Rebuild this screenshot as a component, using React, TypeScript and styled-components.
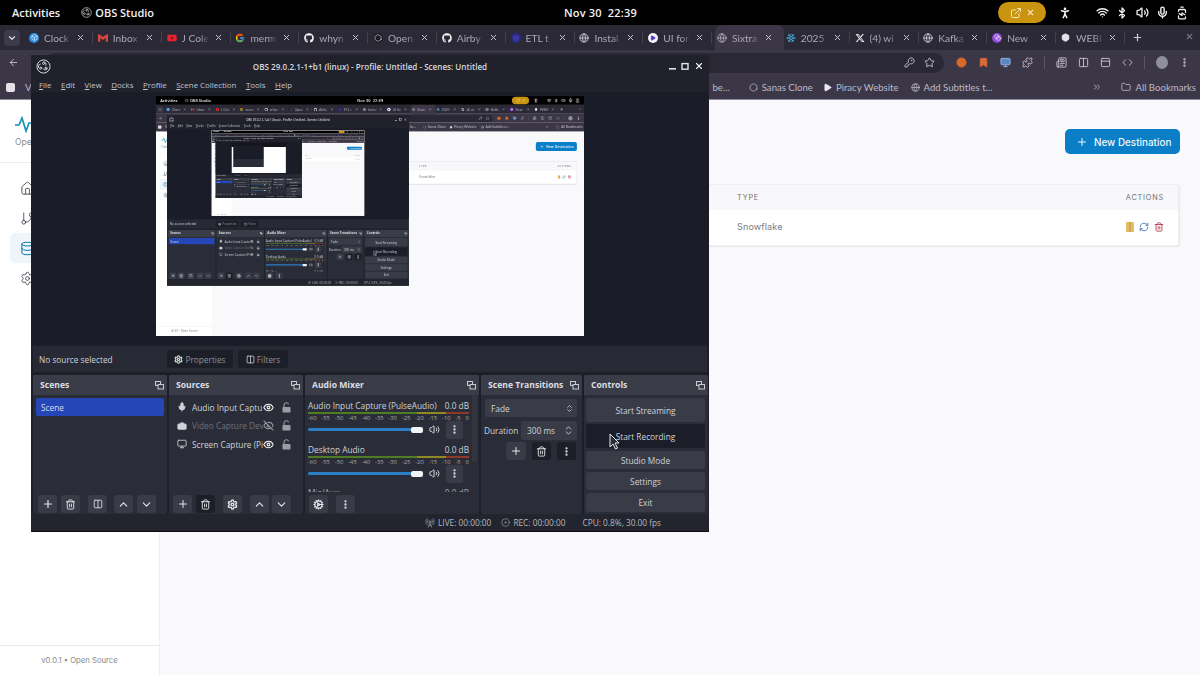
import * as React from 'react';
import styled, { createGlobalStyle } from 'styled-components';
import {
  ArrowLeft, BatteryCharging, Bluetooth, ChevronDown, ChevronUp, ChevronsUpDown, Camera, Code, Cog, Database,
  EllipsisVertical, ExternalLink, Eye, EyeOff, Folder, GitBranch, House, KeyRound, Mic, Monitor,
  PersonStanding, Plus, Puzzle, RefreshCw, Settings, Star, Trash2, Volume2, Wifi, X, Blend, Columns2, Newspaper, PanelTop,
  ChevronsRight, RadioTower, Disc, Bookmark, Globe, Play, Snowflake, Box, Hexagon,
} from 'lucide-react';
import { FaGithub, FaXTwitter, FaYoutube } from 'react-icons/fa6';
import { FcGoogle } from 'react-icons/fc';
import { SiGmail } from 'react-icons/si';

const GlobalStyle = createGlobalStyle`
  html, body { margin: 0; padding: 0; background: #000; }
  * { box-sizing: border-box; }
`;

const MAX_DEPTH = 2;
const SCALE = 428 / 1200;

const Screen = styled.div`
  position: relative;
  width: 1200px;
  height: 675px;
  overflow: hidden;
  display: flex;
  flex-direction: column;
  font-family: 'Open Sans', sans-serif;
  background: #fff;
`;

/* gnome top bar */
const TopBar = styled.div`
  height: 25px;
  flex: none;
  background: #000;
  color: #f2f2f2;
  display: grid;
  grid-template-columns: 1fr auto 1fr;
  align-items: center;
  padding: 0 11px 0 12px;
  font-size: 11px;
  font-weight: 600;
`;

const TopLeft = styled.div`
  display: flex;
  align-items: center;
`;

const AppName = styled.div`
  margin-left: 21px;
  display: flex;
  align-items: center;
  gap: 3px;
`;

const Clock = styled.div`
  letter-spacing: 0.2px;
  display: flex;
  gap: 6px;
`;

const TopRight = styled.div`
  display: flex;
  align-items: center;
  justify-content: flex-end;
`;

const AmberPill = styled.div`
  width: 48px;
  height: 21px;
  border-radius: 11px;
  background: #c9940f;
  display: flex;
  align-items: center;
  justify-content: center;
  gap: 4px;
  margin-right: 12px;
`;

const TrayIcons = styled.div`
  display: flex;
  align-items: center;
  gap: 6px;
`;

const TraySlot = styled.div<{ $gap?: number }>`
  width: 14px;
  display: flex;
  justify-content: center;
  margin-left: ${({ $gap }) => $gap ?? 0}px;
`;

/* browser chrome */
const TabStrip = styled.div`
  height: 25px;
  flex: none;
  background: #2c2937;
  display: flex;
  align-items: center;
  padding-left: 4px;
  color: #aaa6b6;
  font-family: Lato, sans-serif;
  font-size: 10.2px;
`;

const ChevronBox = styled.div`
  width: 16px;
  height: 16px;
  border-radius: 4px;
  background: #3d3a49;
  display: flex;
  align-items: center;
  justify-content: center;
  margin-right: 7px;
  flex: none;
`;

const Tab = styled.div<{ $active?: boolean }>`
  width: 68.8px;
  height: 25px;
  flex: none;
  display: flex;
  align-items: center;
  gap: 5px;
  padding-left: 2px;
  border-radius: 7px 7px 0 0;
  background: ${({ $active }) => ($active ? '#3b3746' : 'transparent')};

  &::after {
    content: '';
    width: 1px;
    height: 11px;
    margin-left: 2px;
    flex: none;
    background: ${({ $active }) => ($active ? 'transparent' : '#45414f')};
  }
`;

const TabTitle = styled.span`
  width: 28px;
  flex: none;
  white-space: nowrap;
  overflow: hidden;
  -webkit-mask-image: linear-gradient(90deg, #000 65%, transparent);
  mask-image: linear-gradient(90deg, #000 65%, transparent);
`;

const TabClose = styled.span`
  display: flex;
  flex: none;
  margin-left: -1px;
`;

const FavSquare = styled.span<{ $bg: string }>`
  width: 10px;
  height: 10px;
  flex: none;
  border-radius: 50%;
  background: ${({ $bg }) => $bg};
  display: flex;
  align-items: center;
  justify-content: center;
  overflow: hidden;
`;

const NewTab = styled.div`
  margin-left: 4px;
  display: flex;
  flex: 1;
  justify-content: space-between;
  padding-right: 6px;
`;

const Toolbar = styled.div`
  height: 25px;
  flex: none;
  background: #3b3746;
  display: flex;
  align-items: center;
  padding: 0 8px;
  color: #c9c5d2;
`;

const AddressBar = styled.div`
  margin-left: 25px;
  width: 900px;
  height: 20px;
  flex: none;
  border-radius: 10px;
  background: #2b2835;
  display: flex;
  align-items: center;
  justify-content: flex-end;
  gap: 9px;
  padding-right: 9px;
`;

const ToolIcons = styled.div`
  display: flex;
  align-items: center;
  margin-left: 12px;
  gap: 11px;
`;

const ToolDivider = styled.div`
  width: 1px;
  height: 13px;
  flex: none;
  background: #5a5666;
`;

const Avatar = styled.div`
  width: 12px;
  height: 13px;
  flex: none;
  border-radius: 50%;
  background: #8d8f99;
`;

const BookmarkBar = styled.div`
  height: 25px;
  flex: none;
  background: #3b3746;
  border-bottom: 1px solid #8f8a9c;
  display: flex;
  align-items: center;
  padding-left: 6px;
  color: #bdb9c7;
  font-family: Lato, sans-serif;
  font-size: 9.6px;
  white-space: nowrap;
`;

const BookmarkItem = styled.div<{ $left: number }>`
  display: flex;
  flex: none;
  align-items: center;
  gap: 4px;
  margin-left: ${({ $left }) => $left}px;
`;

const SmallSquare = styled.div`
  width: 9px;
  height: 9px;
  flex: none;
  border-radius: 2px;
  background: #e4e2e8;
`;

/* page behind */
const Page = styled.div`
  flex: 1;
  display: flex;
  min-height: 0;
  font-family: Inter, sans-serif;
`;

const Sidebar = styled.aside`
  width: 160px;
  flex: none;
  background: #fff;
  border-right: 1px solid #eeeef1;
  display: flex;
  flex-direction: column;
`;

const Brand = styled.div`
  height: 63px;
  flex: none;
  padding: 16px 0 0 15px;
  border-bottom: 1px solid #ececef;
  color: #8a8f98;
  font-size: 8.5px;
  line-height: 18px;
`;

const Nav = styled.nav`
  padding: 10px 10px 0;
  flex: 1;
  display: flex;
  flex-direction: column;
`;

const NavItem = styled.div<{ $active?: boolean }>`
  height: 30px;
  display: flex;
  align-items: center;
  padding-left: 10px;
  border-radius: 5px;
  color: ${({ $active }) => ($active ? '#0a6ea8' : '#3f4650')};
  background: ${({ $active }) => ($active ? '#eef6fb' : 'transparent')};
`;

const SidebarFoot = styled.div`
  height: 30px;
  flex: none;
  border-top: 1px solid #e8e8eb;
  display: flex;
  align-items: center;
  justify-content: center;
  color: #868a91;
  font-size: 7.7px;
`;

const Main = styled.main`
  flex: 1;
  background: #f9f9fb;
  padding: 29px 20px 0 20px;
  display: flex;
  flex-direction: column;
`;

const MainHead = styled.div`
  display: flex;
  justify-content: flex-end;
  margin-bottom: 30px;
`;

const PrimaryButton = styled.button`
  width: 115px;
  height: 25px;
  border: 0;
  border-radius: 5px;
  background: #0a7ec7;
  color: #eef7fd;
  display: flex;
  align-items: center;
  gap: 6px;
  padding: 0 0 0 11px;
  font-family: Inter, sans-serif;
  font-size: 9.9px;
  font-weight: 500;
`;

const Table = styled.div`
  margin-right: 1px;
  border: 1px solid #efeff2;
  border-radius: 3px;
  box-shadow: 1px 1px 2px rgba(0, 0, 0, 0.07);
  background: #fff;
`;

const TableRow = styled.div<{ $head?: boolean }>`
  height: ${({ $head }) => ($head ? 25 : 35)}px;
  padding-bottom: ${({ $head }) => ($head ? 0 : 2)}px;
  display: grid;
  grid-template-columns: 556px 1fr auto;
  align-items: center;
  padding-right: 14px;
  background: ${({ $head }) => ($head ? '#f8f8fa' : '#fff')};
  color: ${({ $head }) => ($head ? '#6f7177' : '#7a7c82')};
  font-size: ${({ $head }) => ($head ? 7.3 : 9.1)}px;
  letter-spacing: ${({ $head }) => ($head ? 0.8 : 0.1)}px;
`;

const RowActions = styled.div`
  display: flex;
  gap: 5px;
  align-items: center;
`;

/* obs window: lies over the desktop */
const ObsWindow = styled.div`
  position: absolute;
  left: 31px;
  top: 55px;
  width: 678px;
  height: 477px;
  background: #1c1e28;
  border-bottom: 1px solid #0c0c10;
  display: flex;
  flex-direction: column;
  font-family: 'Open Sans', sans-serif;
  color: #cfd2d8;
  font-size: 8.3px;
`;

const TitleBar = styled.div`
  height: 22px;
  flex: none;
  display: grid;
  grid-template-columns: 60px 1fr 60px;
  align-items: center;
  padding: 0 5px;
  background: #20212b;
  color: #d6d7dc;
  font-size: 8.1px;
  font-weight: 600;
`;

const TitleText = styled.div`
  text-align: center;
  white-space: nowrap;
`;

const WindowButtons = styled.div`
  display: flex;
  justify-content: flex-end;
  align-items: center;
  gap: 5px;
`;

const MenuBar = styled.div`
  height: 15px;
  flex: none;
  display: flex;
  align-items: center;
  gap: 9.5px;
  padding-left: 8px;
  background: #20212b;
  color: #c2c4cb;
  font-size: 7.9px;
`;

const MenuItem = styled.span`
  &::first-letter {
    text-decoration: underline;
  }
`;

const PreviewArea = styled.div`
  height: 253px;
  flex: none;
  padding-top: 4px;
  display: flex;
  justify-content: center;
  background: #1a1c27;
`;

const PreviewFrame = styled.div`
  width: 428px;
  height: 240px;
  overflow: hidden;
  flex: none;
  background: #fff;
`;

const Scaled = styled.div`
  width: 1200px;
  height: 675px;
  transform: scale(${SCALE});
  transform-origin: top left;
  filter: blur(0.7px);
`;

/* the innermost capture is only a few pixels wide, so it is flat colour */
const TinyCapture = styled.div`
  width: 100%;
  height: 100%;
  background:
    linear-gradient(#1a1c27 0 64%, #2a2d37 64% 100%) 7.5% 35% / 56% 70% no-repeat,
    linear-gradient(#16141d 0 15%, #ffffff 15% 100%);
`;

const ContextBar = styled.div`
  height: 26px;
  flex: none;
  margin: 1px 2px 0;
  padding-left: 6px;
  background: #272a34;
  display: flex;
  align-items: center;
`;

const ContextLabel = styled.span`
  width: 128px;
`;

const ContextButton = styled.div<{ $w: number }>`
  width: ${({ $w }) => $w}px;
  height: 18px;
  margin-right: 5px;
  border-radius: 3px;
  background: #1c1e28;
  color: #8f929a;
  display: flex;
  align-items: center;
  justify-content: center;
  gap: 2px;
`;

const Docks = styled.div`
  height: 139px;
  flex: none;
  margin-top: 3px;
  padding: 0 1px 0 2px;
  display: grid;
  grid-template-columns: 134px 134px 174px 101px 1fr;
  gap: 2px;
`;

const Dock = styled.section`
  background: #2a2d37;
  display: flex;
  flex-direction: column;
  min-width: 0;
  border-radius: 2px;
  overflow: hidden;
`;

const DockHeader = styled.header`
  height: 20px;
  flex: none;
  background: #3a3d48;
  display: flex;
  align-items: center;
  justify-content: space-between;
  padding: 0 3px 0 7px;
  font-weight: 700;
  font-size: 8.6px;
  color: #dcdee3;
`;

const DockBody = styled.div`
  flex: 1;
  min-height: 0;
  overflow: hidden;
`;

const SceneRow = styled.div`
  margin: 3px 3px 0;
  height: 18px;
  border-radius: 2px;
  background: #2446b6;
  color: #d6def5;
  display: flex;
  align-items: center;
  padding-left: 5px;
`;

const SourceList = styled.div`
  padding: 3px 0 0 8px;
`;

const SourceRow = styled.div<{ $off?: boolean }>`
  height: 18.6px;
  display: grid;
  grid-template-columns: 15px 71px 19px 14px;
  align-items: center;
  color: ${({ $off }) => ($off ? '#6e717a' : '#cfd2d8')};
`;

const SourceName = styled.span`
  white-space: nowrap;
  overflow: hidden;
`;

const DockFooter = styled.div`
  height: 20px;
  flex: none;
  display: flex;
  align-items: center;
  padding-left: 4px;
  background: #2a2d37;
`;

const IconButton = styled.div<{ $dark?: boolean; $w?: number; $ml?: number }>`
  width: ${({ $w }) => $w ?? 19}px;
  height: 18px;
  flex: none;
  margin-left: ${({ $ml }) => $ml ?? 0}px;
  border-radius: 3px;
  display: flex;
  align-items: center;
  justify-content: center;
  background: ${({ $dark }) => ($dark ? '#1c1e28' : '#393c47')};
  color: #e4e5e9;
`;

const MixerBody = styled.div`
  flex: 1;
  min-height: 0;
  overflow: hidden;
  display: grid;
  grid-template-columns: 1fr 7px;
`;

const MixerList = styled.div`
  padding: 4px 0 0 3px;
  min-width: 0;
`;

const MixerGutter = styled.div`
  background: #33363f;
  height: 67px;
  margin-right: 2px;
`;

const Channel = styled.div`
  height: 44px;
`;

const ChannelHead = styled.div`
  height: 13px;
  display: flex;
  justify-content: space-between;
  align-items: center;
  padding-right: 3px;
  white-space: nowrap;
`;

const Meter = styled.div`
  height: 2px;
  margin-right: 3px;
  background: linear-gradient(90deg, #4f7d24 0 68%, #8f8a24 68% 86%, #8d3a2a 86% 100%);
`;

const Scale = styled.div`
  height: 8px;
  display: flex;
  justify-content: space-between;
  margin-right: 3px;
  font-size: 5.8px;
  line-height: 8px;
  color: #a5a8af;
`;

const ChannelControls = styled.div`
  height: 17px;
  margin-top: -1.5px;
  display: grid;
  grid-template-columns: 115px 23px 17px;
  align-items: center;
`;

const Slider = styled.div`
  height: 3px;
  border-radius: 2px;
  background: #2b7fc4;
  display: flex;
  align-items: center;
  justify-content: flex-end;
`;

const Knob = styled.span`
  width: 12px;
  height: 6px;
  border-radius: 2px;
  background: #f3f3f3;
`;

const SpeakerSlot = styled.div`
  display: flex;
  justify-content: center;
  color: #e8e8ea;
`;

const CutChannel = styled.div`
  display: flex;
  justify-content: space-between;
  padding: 0 3px 0 0;
  height: 5px;
  overflow: hidden;
  color: #a5a8af;
  line-height: 12px;
`;

const TransitionBody = styled.div`
  padding: 4px 5px 0 3px;
  display: flex;
  flex-direction: column;
  flex: 1;
`;

const SelectBox = styled.div`
  height: 18px;
  margin-left: 1px;
  border-radius: 2px;
  background: #393c47;
  display: flex;
  align-items: center;
  justify-content: space-between;
  padding: 0 3px 0 6px;
`;

const DurationRow = styled.div`
  margin-top: 4px;
  display: flex;
  align-items: center;
  justify-content: space-between;
`;

const SpinBox = styled(SelectBox)`
  width: 56px;
  height: 19px;
`;

const TransitionButtons = styled.div`
  margin-top: 2px;
  padding-left: 22px;
  display: flex;
  gap: 6px;
`;

const ControlsBody = styled.div`
  padding: 3px 3px 0 2px;
  display: flex;
  flex-direction: column;
`;

const ControlButton = styled.div<{ $h: number; $gap: number; $hover?: boolean }>`
  height: ${({ $h }) => $h}px;
  flex: none;
  margin-bottom: ${({ $gap }) => $gap}px;
  border-radius: 3px;
  background: ${({ $hover }) => ($hover ? '#1b1d28' : '#393c47')};
  display: flex;
  align-items: center;
  justify-content: center;
`;

const StatusBar = styled.div`
  flex: 1;
  display: flex;
  align-items: center;
  padding-left: 394px;
  background: #22242e;
  color: #b6b8bf;
  font-size: 8.3px;
  white-space: nowrap;
`;

const StatusItem = styled.span<{ $ml?: number }>`
  display: flex;
  align-items: center;
  gap: 3px;
  margin-left: ${({ $ml }) => $ml ?? 0}px;
`;

const Pointer = styled.svg`
  position: absolute;
  left: 609px;
  top: 433px;
`;

const DockFloat = () => (
  <svg width="9" height="9" viewBox="0 0 9 9" fill="none" stroke="#c9cbd1" strokeWidth="1">
    <rect x="0.5" y="0.5" width="5" height="4" />
    <rect x="3" y="3.5" width="5.5" height="4.5" fill="#3a3d48" />
  </svg>
);

const ObsLogo = ({ size, color }: { size: number; color: string }) => (
  <svg width={size} height={size} viewBox="0 0 24 24" fill="none" stroke={color} strokeWidth="1.6">
    <circle cx="12" cy="12" r="10.5" />
    <path d="M12 4.5a4 4 0 0 1 3.5 6M18.5 15a4 4 0 0 1-7 .5M6 15.5a4 4 0 0 1 1.5-7.5" />
    <circle cx="12" cy="7" r="1.6" />
    <circle cx="16" cy="14.5" r="1.6" />
    <circle cx="7.8" cy="14.5" r="1.6" />
  </svg>
);

const DocIcon = () => (
  <svg width="8" height="10" viewBox="0 0 8 10">
    <rect width="8" height="10" rx="1" fill="#e2bd63" />
    <rect x="3.6" width="0.8" height="10" fill="#b08a35" />
  </svg>
);

const SourceLock = () => (
  <svg width="9" height="11" viewBox="0 0 9 11" fill="none">
    <path d="M2 5V3a2.4 2.4 0 0 1 4.6-.8" stroke="#9b9da5" strokeWidth="1.1" />
    <rect x="0.5" y="5" width="8" height="5.5" rx="0.8" fill="#9b9da5" />
  </svg>
);

const tabs: { title: string; icon: React.ReactNode }[] = [
  { title: 'Clock', icon: <FavSquare $bg="#2a8fe0"><Box size={7} color="#fff" /></FavSquare> },
  { title: 'Inbox', icon: <SiGmail size={10} color="#d8473f" /> },
  { title: 'J Cole', icon: <FaYoutube size={10} color="#e8222c" /> },
  { title: 'merm', icon: <FcGoogle size={10} /> },
  { title: 'whyn', icon: <FaGithub size={10} color="#f1f1f1" /> },
  { title: 'Open', icon: <FavSquare $bg="#1c1b22"><Hexagon size={8} color="#cfcfd6" /></FavSquare> },
  { title: 'Airby', icon: <FaGithub size={10} color="#f1f1f1" /> },
  { title: 'ETL t', icon: <FavSquare $bg="#2a2a86"><Box size={6} color="#5a5ad0" /></FavSquare> },
  { title: 'Instal', icon: <FavSquare $bg="#3b3746"><Globe size={10} color="#cfcfd6" /></FavSquare> },
  { title: 'UI for', icon: <FavSquare $bg="#f4f4f8"><Play size={6} color="#4a38c8" fill="#4a38c8" /></FavSquare> },
  { title: 'Sixtra', icon: <Globe size={10} color="#b4b2bd" /> },
  { title: '2025', icon: <Snowflake size={10} color="#45b4e6" /> },
  { title: '(4) wi', icon: <FaXTwitter size={10} color="#f1f1f1" /> },
  { title: 'Kafka', icon: <Globe size={10} color="#d6d6dc" /> },
  { title: 'New', icon: <FavSquare $bg="#8f46d6"><Blend size={7} color="#fff" /></FavSquare> },
  { title: 'WEBI', icon: <FavSquare $bg="transparent"><Box size={9} color="#e4e4e8" fill="#e4e4e8" /></FavSquare> },
];

const scaleMarks = ['-60', '-55', '-50', '-45', '-40', '-35', '-30', '-25', '-20', '-15', '-10', '-5', '0'];

const MixerChannel = ({ name }: { name: string }) => (
  <Channel>
    <ChannelHead>
      <span>{name}</span>
      <span>0.0 dB</span>
    </ChannelHead>
    <Meter />
    <Scale>
      {scaleMarks.map((m) => (
        <span key={m}>{m}</span>
      ))}
    </Scale>
    <ChannelControls>
      <Slider>
        <Knob />
      </Slider>
      <SpeakerSlot>
        <Volume2 size={11} />
      </SpeakerSlot>
      <IconButton $w={17}>
        <EllipsisVertical size={11} strokeWidth={3} />
      </IconButton>
    </ChannelControls>
  </Channel>
);

const BrowserChrome = () => (
  <>
    <TopBar>
      <TopLeft>
        Activities
        <AppName>
          <ObsLogo size={11} color="#d0d0d0" />
          OBS Studio
        </AppName>
      </TopLeft>
      <Clock>
        <span>Nov 30</span>
        <span>22:39</span>
      </Clock>
      <TopRight>
        <AmberPill>
          <ExternalLink size={12} color="#f6e6b5" />
          <X size={9} color="#f6e6b5" strokeWidth={3} />
        </AmberPill>
        <TrayIcons>
          <TraySlot><PersonStanding size={14} color="#f2f2f2" strokeWidth={2.6} /></TraySlot>
          <TraySlot $gap={17}><Wifi size={13} color="#f2f2f2" strokeWidth={2.6} /></TraySlot>
          <TraySlot><Bluetooth size={12} color="#f2f2f2" strokeWidth={2.6} /></TraySlot>
          <TraySlot><Volume2 size={13} color="#f2f2f2" strokeWidth={2.4} /></TraySlot>
          <TraySlot><Mic size={13} color="#f2f2f2" strokeWidth={2.6} /></TraySlot>
          <TraySlot><BatteryCharging size={14} color="#f2f2f2" strokeWidth={2.2} style={{ transform: 'rotate(-90deg)' }} /></TraySlot>
        </TrayIcons>
      </TopRight>
    </TopBar>
    <TabStrip>
      <ChevronBox>
        <ChevronDown size={10} color="#d8d6de" strokeWidth={3} />
      </ChevronBox>
      {tabs.map((t) => (
        <Tab key={t.title} $active={t.title === 'Sixtra'}>
          {t.icon}
          <TabTitle>{t.title}</TabTitle>
          <TabClose>
            <X size={9} color="#c9c5d2" strokeWidth={2.6} />
          </TabClose>
        </Tab>
      ))}
      <NewTab>
        <Plus size={11} color="#d0cdd8" strokeWidth={2.6} />
        <X size={9} color="#77737f" strokeWidth={3} />
      </NewTab>
    </TabStrip>
    <Toolbar>
      <ArrowLeft size={11} />
      <AddressBar>
        <KeyRound size={11} />
        <Star size={11} />
      </AddressBar>
      <ToolIcons>
        <Disc size={11} color="#d9682a" fill="#d9682a" />
        <Bookmark size={11} color="#d96a3a" fill="#d96a3a" />
        <Monitor size={11} color="#8fb6ea" fill="#5d85c2" />
        <Puzzle size={11} />
        <ToolDivider />
        <Newspaper size={11} />
        <Columns2 size={11} />
        <PanelTop size={11} />
        <Code size={11} />
        <ToolDivider />
        <Avatar />
        <EllipsisVertical size={11} strokeWidth={3} />
      </ToolIcons>
    </Toolbar>
    <BookmarkBar>
      <SmallSquare />
      <BookmarkItem $left={10}>V</BookmarkItem>
      <BookmarkItem $left={681}>be...</BookmarkItem>
      <BookmarkItem $left={19}><Hexagon size={9} />Sanas Clone</BookmarkItem>
      <BookmarkItem $left={10}><Play size={9} fill="#e8e8ee" color="#e8e8ee" />Piracy Website</BookmarkItem>
      <BookmarkItem $left={12}><Globe size={9} />Add Subtitles t...</BookmarkItem>
      <BookmarkItem $left={100}><ChevronsRight size={10} /></BookmarkItem>
      <BookmarkItem $left={19}><Folder size={10} />All Bookmarks</BookmarkItem>
    </BookmarkBar>
  </>
);

const WebPage = () => (
  <Page>
    <Sidebar>
      <Brand>
        <svg width="30" height="17" viewBox="0 0 30 17" fill="none" stroke="#1290b8" strokeWidth="1.7" style={{ display: 'block' }}>
          <path d="M0 9h4l3-7 4 13 3-8h3" />
        </svg>
        Open
      </Brand>
      <Nav>
        <NavItem><House size={15} strokeWidth={1.4} /></NavItem>
        <NavItem><GitBranch size={15} strokeWidth={1.4} /></NavItem>
        <NavItem $active><Database size={15} strokeWidth={1.6} /></NavItem>
        <NavItem><Settings size={15} strokeWidth={1.4} /></NavItem>
      </Nav>
      <SidebarFoot>v0.0.1 • Open Source</SidebarFoot>
    </Sidebar>
    <Main>
      <MainHead>
        <PrimaryButton>
          <Plus size={12} />
          New Destination
        </PrimaryButton>
      </MainHead>
      <Table>
        <TableRow $head>
          <span />
          <span>TYPE</span>
          <span>ACTIONS</span>
        </TableRow>
        <TableRow>
          <span />
          <span>Snowflake</span>
          <RowActions>
            <DocIcon />
            <RefreshCw size={10} color="#3a6fb0" />
            <Trash2 size={10} color="#b23440" />
          </RowActions>
        </TableRow>
      </Table>
    </Main>
  </Page>
);

const ObsStudio = ({ depth }: { depth: number }) => (
  <ObsWindow>
    <TitleBar>
      <ObsLogo size={15} color="#d8d8dc" />
      <TitleText>OBS 29.0.2.1-1+b1 (linux) - Profile: Untitled - Scenes: Untitled</TitleText>
      <WindowButtons>
        <svg width="7" height="9" viewBox="0 0 7 9"><rect y="6" width="7" height="1.6" fill="#e4e4e8" /></svg>
        <svg width="8" height="9" viewBox="0 0 8 9" fill="none" stroke="#e4e4e8" strokeWidth="1.4"><rect x="1" y="1.6" width="6" height="5.6" /></svg>
        <X size={10} color="#f0f0f2" strokeWidth={2.6} />
      </WindowButtons>
    </TitleBar>
    <MenuBar>
      {['File', 'Edit', 'View', 'Docks', 'Profile', 'Scene Collection', 'Tools', 'Help'].map((m) => (
        <MenuItem key={m}>{m}</MenuItem>
      ))}
    </MenuBar>
    <PreviewArea>
      <PreviewFrame>
        {depth < MAX_DEPTH ? (
          <Scaled>
            <Desktop depth={depth + 1} />
          </Scaled>
        ) : (
          <TinyCapture />
        )}
      </PreviewFrame>
    </PreviewArea>
    <ContextBar>
      <ContextLabel>No source selected</ContextLabel>
      <ContextButton $w={66}>
        <Settings size={9} color="#d9dadf" strokeWidth={3} />
        Properties
      </ContextButton>
      <ContextButton $w={50}>
        <Columns2 size={9} color="#d9dadf" />
        Filters
      </ContextButton>
    </ContextBar>
    <Docks>
      <Dock>
        <DockHeader>Scenes<DockFloat /></DockHeader>
        <DockBody><SceneRow>Scene</SceneRow></DockBody>
        <DockFooter>
          <IconButton $ml={1}><Plus size={12} strokeWidth={2.4} /></IconButton>
          <IconButton $ml={4}><Trash2 size={11} /></IconButton>
          <IconButton $ml={8}><Columns2 size={10} /></IconButton>
          <IconButton $ml={7}><ChevronUp size={13} /></IconButton>
          <IconButton $ml={4}><ChevronDown size={13} /></IconButton>
        </DockFooter>
      </Dock>
      <Dock>
        <DockHeader>Sources<DockFloat /></DockHeader>
        <DockBody>
          <SourceList>
            <SourceRow>
              <Mic size={10} fill="#cfd2d8" />
              <SourceName>Audio Input Captu</SourceName>
              <Eye size={11} strokeWidth={2.4} color="#f0f0f2" />
              <SourceLock />
            </SourceRow>
            <SourceRow $off>
              <Camera size={10} fill="#cfd2d8" color="#cfd2d8" />
              <SourceName>Video Capture Dev</SourceName>
              <EyeOff size={11} strokeWidth={2.2} color="#9b9da5" />
              <SourceLock />
            </SourceRow>
            <SourceRow>
              <Monitor size={10} />
              <SourceName>Screen Capture (Pi</SourceName>
              <Eye size={11} strokeWidth={2.4} color="#f0f0f2" />
              <SourceLock />
            </SourceRow>
          </SourceList>
        </DockBody>
        <DockFooter>
          <IconButton><Plus size={12} strokeWidth={2} /></IconButton>
          <IconButton $ml={4} $dark><Trash2 size={11} /></IconButton>
          <IconButton $ml={8}><Settings size={11} color="#e4e5e9" strokeWidth={3} /></IconButton>
          <IconButton $ml={8}><ChevronUp size={13} /></IconButton>
          <IconButton $ml={3}><ChevronDown size={13} /></IconButton>
        </DockFooter>
      </Dock>
      <Dock>
        <DockHeader>Audio Mixer<DockFloat /></DockHeader>
        <MixerBody>
          <MixerList>
            <MixerChannel name="Audio Input Capture (PulseAudio)" />
            <MixerChannel name="Desktop Audio" />
            <CutChannel>
              <span>Mic/Aux</span>
              <span>0.0 dB</span>
            </CutChannel>
          </MixerList>
          <MixerGutter />
        </MixerBody>
        <DockFooter>
          <IconButton><Cog size={11} strokeWidth={2.6} /></IconButton>
          <IconButton $ml={8}><EllipsisVertical size={11} strokeWidth={3} /></IconButton>
        </DockFooter>
      </Dock>
      <Dock>
        <DockHeader>Scene Transitions<DockFloat /></DockHeader>
        <TransitionBody>
          <SelectBox>
            Fade
            <ChevronsUpDown size={9} />
          </SelectBox>
          <DurationRow>
            <span>Duration</span>
            <SpinBox>
              300 ms
              <ChevronsUpDown size={11} />
            </SpinBox>
          </DurationRow>
          <TransitionButtons>
            <IconButton $w={20}><Plus size={12} /></IconButton>
            <IconButton $w={19} $dark><Trash2 size={11} /></IconButton>
            <IconButton $w={19} $dark><EllipsisVertical size={11} strokeWidth={3} /></IconButton>
          </TransitionButtons>
        </TransitionBody>
      </Dock>
      <Dock>
        <DockHeader>Controls<DockFloat /></DockHeader>
        <ControlsBody>
          <ControlButton $h={24} $gap={2}>Start Streaming</ControlButton>
          <ControlButton $h={24} $gap={3} $hover>Start Recording</ControlButton>
          <ControlButton $h={18} $gap={3}>Studio Mode</ControlButton>
          <ControlButton $h={18} $gap={3}>Settings</ControlButton>
          <ControlButton $h={19} $gap={0}>Exit</ControlButton>
        </ControlsBody>
      </Dock>
    </Docks>
    <StatusBar>
      <StatusItem><RadioTower size={10} color="#8d8f97" />LIVE: 00:00:00</StatusItem>
      <StatusItem $ml={10}><Disc size={9} color="#8d8f97" />REC: 00:00:00</StatusItem>
      <StatusItem $ml={17}>CPU: 0.8%, 30.00 fps</StatusItem>
    </StatusBar>
  </ObsWindow>
);

function Desktop({ depth }: { depth: number }) {
  return (
    <Screen>
      <BrowserChrome />
      <WebPage />
      <ObsStudio depth={depth} />
      <Pointer width="12" height="17" viewBox="0 0 12 17">
        <path d="M1 1v13l3-3 2.5 5 2-1-2.4-5H10z" fill="#2a2d37" stroke="#e8e8ec" strokeWidth="1" />
      </Pointer>
    </Screen>
  );
}

const App: React.FC<{}> = () => (
  <>
    <GlobalStyle />
    <Desktop depth={0} />
  </>
);

export default App;
